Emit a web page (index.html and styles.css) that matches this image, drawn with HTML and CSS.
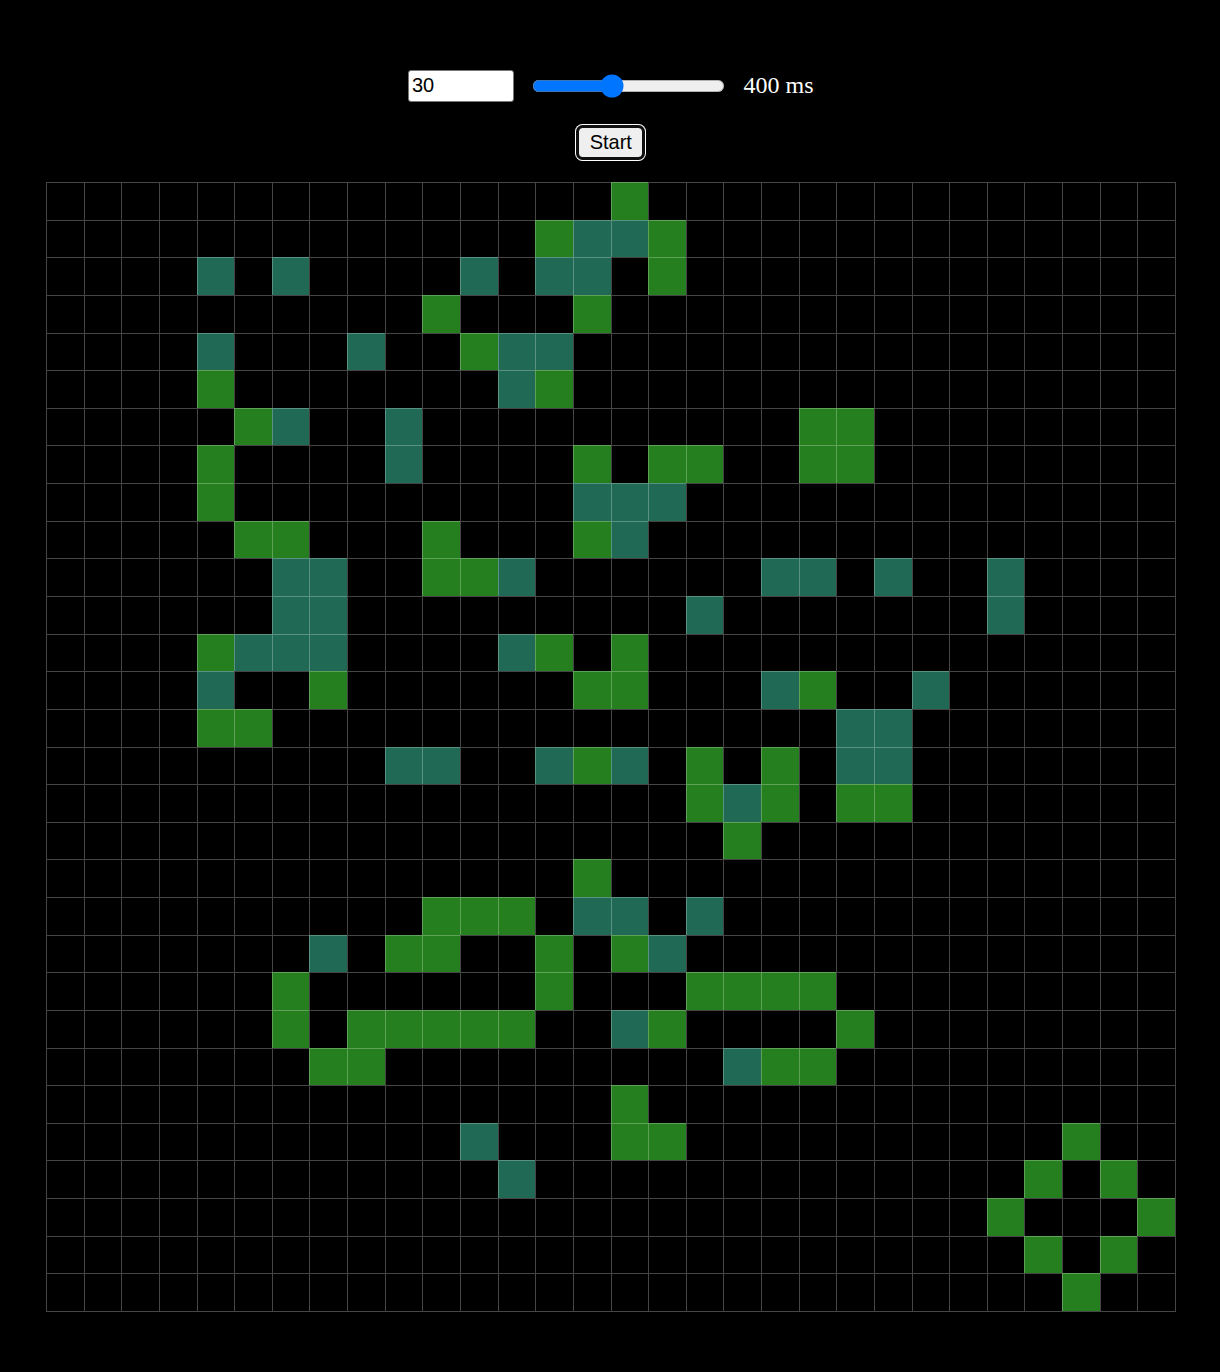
FILE: index.html
```html
<!DOCTYPE html>
<html lang="en">
<head>
<meta charset="utf-8">
<title>Game of Life</title>
<link rel="stylesheet" href="styles.css">
</head>
<body>
<div class="controls">
  <div class="row">
    <input class="size-input" type="number" value="30">
    <input class="speed-range" type="range" min="0" max="1000" step="50" value="400">
    <span class="speed-label">400 ms</span>
  </div>
  <div class="row start-row">
    <button class="start-btn" type="button">Start</button>
  </div>
</div>
<div class="board-wrap">
  <div class="board" id="board"></div>
</div>
<script src="app.js"></script>
</body>
</html>
```
FILE: styles.css
```css
html, body {
  margin: 0;
  background: #000;
}
body {
  font-family: "Liberation Serif", "Times New Roman", serif;
  color: #fff;
}
.controls {
  zoom: 1.5;
  display: flex;
  flex-direction: column;
  align-items: center;
  padding-top: 46.67px;
}
.row {
  display: flex;
  align-items: center;
  gap: 10px;
  padding-left: 1px;
}
.size-input {
  box-sizing: border-box;
  width: 70.67px;
  height: 21px;
  margin: 0;
  padding: 1px 2px;
  font-family: "Liberation Sans", Arial, sans-serif;
  font-size: 13.33px;
  color: #000;
  background: #fff;
  border: 1px solid #767676;
  border-radius: 2px;
  -moz-appearance: textfield;
}
.size-input::-webkit-inner-spin-button,
.size-input::-webkit-outer-spin-button {
  -webkit-appearance: none;
  margin: 0;
}
.speed-range {
  width: 129px;
  margin: 2px;
}
.speed-label {
  font-size: 16px;
  line-height: 18px;
}
.start-row {
  margin-top: 17px;
}
.start-btn {
  font-family: "Liberation Sans", Arial, sans-serif;
  font-size: 13.33px;
  background: #efefef;
  color: #000;
  border: 1px solid #767676;
  border-radius: 3px;
  padding: 2px 7px;
  outline: 2px solid #101010;
  outline-offset: -1px;
  box-shadow: 0 0 0 2px #fff;
}
.board-wrap {
  display: flex;
  justify-content: center;
  padding: 24px 0 0 2px;
}
.board {
  box-sizing: border-box;
  width: 1130px;
  height: 1130px;
  display: grid;
  grid-template-columns: repeat(30, 1fr);
  grid-template-rows: repeat(30, 1fr);
  border-right: 1px solid #464646;
  border-bottom: 1px solid #464646;
}
.cell {
  border-left: 1px solid rgba(255, 255, 255, 0.27);
  border-top: 1px solid rgba(255, 255, 255, 0.27);
}
.cell.g {
  background: #267f1e;
}
.cell.t {
  background: #1f6955;
}
```
FILE: app.js
```js
(function () {
  var rows = [
    "15g",
    "13g 14t 15t 16g",
    "4t 6t 11t 13t 14t 16g",
    "10g 14g",
    "4t 8t 11g 12t 13t",
    "4g 12t 13g",
    "5g 6t 9t 20g 21g",
    "4g 9t 14g 16g 17g 20g 21g",
    "4g 14t 15t 16t",
    "5g 6g 10g 14g 15t",
    "6t 7t 10g 11g 12t 19t 20t 22t 25t",
    "6t 7t 17t 25t",
    "4g 5t 6t 7t 12t 13g 15g",
    "4t 7g 14g 15g 19t 20g 23t",
    "4g 5g 21t 22t",
    "9t 10t 13t 14g 15t 17g 19g 21t 22t",
    "17g 18t 19g 21g 22g",
    "18g",
    "14g",
    "10g 11g 12g 14t 15t 17t",
    "7t 9g 10g 13g 15g 16t",
    "6g 13g 17g 18g 19g 20g",
    "6g 8g 9g 10g 11g 12g 15t 16g 21g",
    "7g 8g 18t 19g 20g",
    "15g",
    "11t 15g 16g 27g",
    "12t 26g 28g",
    "25g 29g",
    "26g 28g",
    "27g"
  ];
  var board = document.getElementById("board");
  var frag = document.createDocumentFragment();
  for (var r = 0; r < 30; r++) {
    var map = {};
    rows[r].split(" ").forEach(function (tok) {
      if (!tok) return;
      map[parseInt(tok, 10)] = tok.slice(-1);
    });
    for (var c = 0; c < 30; c++) {
      var d = document.createElement("div");
      d.className = "cell" + (map[c] ? " " + map[c] : "");
      frag.appendChild(d);
    }
  }
  board.appendChild(frag);
})();
```
